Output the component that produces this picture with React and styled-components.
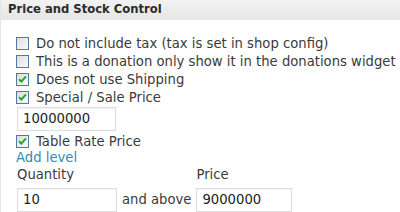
import React from "react";
import styled, { createGlobalStyle } from "styled-components";

const GlobalStyle = createGlobalStyle`
	body {
		margin: 0;
		background: #fff;
		font-family: "DejaVu Sans", Verdana, sans-serif;
		color: #3a3a3a;
	}
`;

const Panel = styled.div`
	width: 400px;
	height: 212px;
	overflow: hidden;
	border-left: 1px solid #e4e4e4;
	box-sizing: border-box;
`;

const Header = styled.div`
	height: 19px;
	padding-left: 7px;
	background: linear-gradient(#f2f2f2, #e6e6e6);
	border-bottom: 1px solid #e9e9e9;
	font-weight: bold;
	font-size: 11.6px;
	line-height: 19px;
	color: #2b2b2b;
`;

const Body = styled.div`
	padding: 14px 0 0 15px;
	display: flex;
	flex-direction: column;
	font-size: 13.2px;
`;

const Row = styled.label`
	display: flex;
	align-items: center;
	gap: 7px;
	height: 18px;
	white-space: nowrap;
`;

const Box = styled.span`
	width: 11px;
	height: 11px;
	flex: none;
	border: 1px solid #4f7aa6;
	background: linear-gradient(135deg, #dcdcdc, #fbfbfb);
	display: flex;
	align-items: center;
	justify-content: center;
`;

const Field = styled.div`
	width: ${(p) => p.$w}px;
	height: 24px;
	box-sizing: border-box;
	border: 1px solid #dcdcdc;
	box-shadow: inset 0 1px 1px rgba(0, 0, 0, 0.05);
	padding-left: 5px;
	line-height: 22px;
	font-size: 13.2px;
	color: #222;
	margin: ${(p) => p.$m || "0"};
`;

const Link = styled.a`
	color: #2f8db4;
	text-decoration: none;
	line-height: 14px;
	margin-top: 1px;
`;

const Tiers = styled.div`
	display: flex;
	align-items: flex-end;
	gap: 5px;
	margin-top: 2px;
	padding-left: 1px;
`;

const Col = styled.div`
	display: flex;
	flex-direction: column;
	gap: 5px;
`;

const Lbl = styled.span`
	line-height: 16px;
`;

const Between = styled.span`
	line-height: 24px;
`;

const Check = ({ checked, children }) => (
	<Row>
		<Box>
			{checked && (
				<svg width="9" height="8" viewBox="0 0 9 8">
					<path d="M1 4.2 L3.4 6.5 L8 1.3" fill="none" stroke="#1faa2a" strokeWidth="2" />
				</svg>
			)}
		</Box>
		{children}
	</Row>
);

export default function App() {
	return (
		<>
			<GlobalStyle />
			<Panel>
				<Header>Price and Stock Control</Header>
				<Body>
					<Check>Do not include tax (tax is set in shop config)</Check>
					<Check>This is a donation only show it in the donations widget</Check>
					<Check checked>Does not use Shipping</Check>
					<Check checked>Special / Sale Price</Check>
					<Field $w={99} $m="1px 0 1px 1px">10000000</Field>
					<Check checked>Table Rate Price</Check>
					<Link href="#">Add level</Link>
					<Tiers>
						<Col>
							<Lbl>Quantity</Lbl>
							<Field $w={100}>10</Field>
						</Col>
						<Between>and above</Between>
						<Col>
							<Lbl>Price</Lbl>
							<Field $w={96}>9000000</Field>
						</Col>
					</Tiers>
				</Body>
			</Panel>
		</>
	);
}
